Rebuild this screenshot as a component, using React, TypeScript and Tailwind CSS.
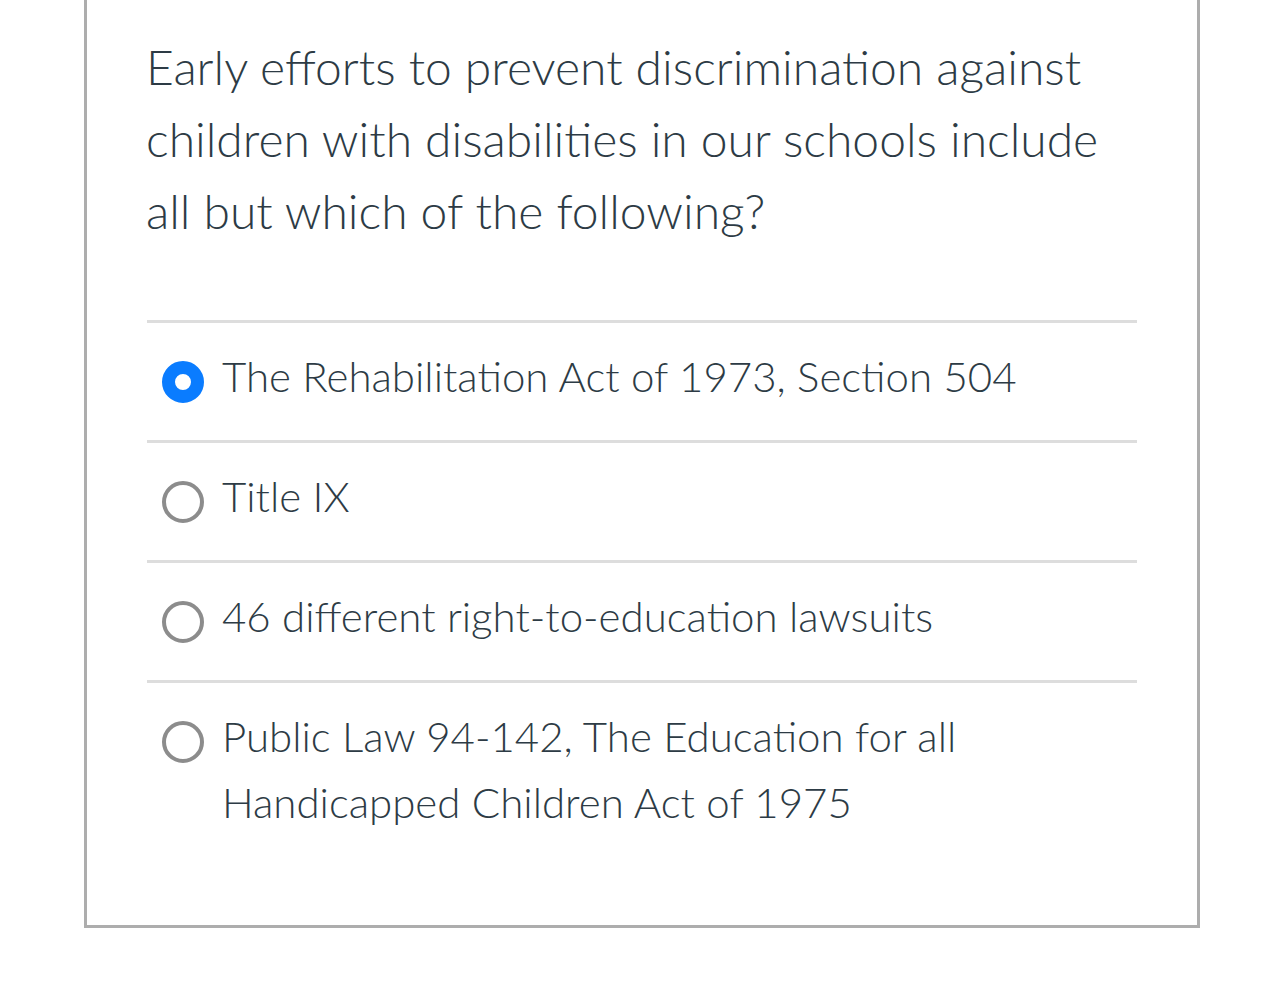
import { useState } from 'react';

const options = [
  'The Rehabilitation Act of 1973, Section 504',
  'Title IX',
  '46 different right-to-education lawsuits',
  'Public Law 94-142, The Education for all Handicapped Children Act of 1975',
];

export default function App() {
  const [selected, setSelected] = useState(0);

  return (
    <div className="min-h-screen bg-white font-['Lato',sans-serif] text-[#2d3b45]">
      <div className="ml-[84px] w-[1116px] border-x-[3px] border-b-[3px] border-[#adadad] px-[60px] pt-[31px] pb-[59px]">
        <p className="-ml-px text-[48px] font-light leading-[72px]">
          Early efforts to prevent discrimination against children with disabilities in our schools include all but
          which of the following?
        </p>

        <div className="mt-[73px]">
          {options.map((opt, i) => (
            <label
              key={i}
              className="flex cursor-pointer items-start border-t-[3px] border-[#dddddd] pt-[20px] pb-[31px] pl-[15px] pr-[100px]"
              onClick={() => setSelected(i)}
            >
              <span className="mt-[18px] flex h-[42px] w-[42px] shrink-0 items-center justify-center">
                {selected === i ? (
                  <span className="block h-[42px] w-[42px] rounded-full border-[13px] border-[#0a7cff] bg-white" />
                ) : (
                  <span className="block h-[42px] w-[42px] rounded-full border-[4px] border-[#8c8c8c] bg-white" />
                )}
              </span>
              <span className="ml-[18px] text-[42px] font-light leading-[66px]">{opt}</span>
            </label>
          ))}
        </div>
      </div>
    </div>
  );
}
